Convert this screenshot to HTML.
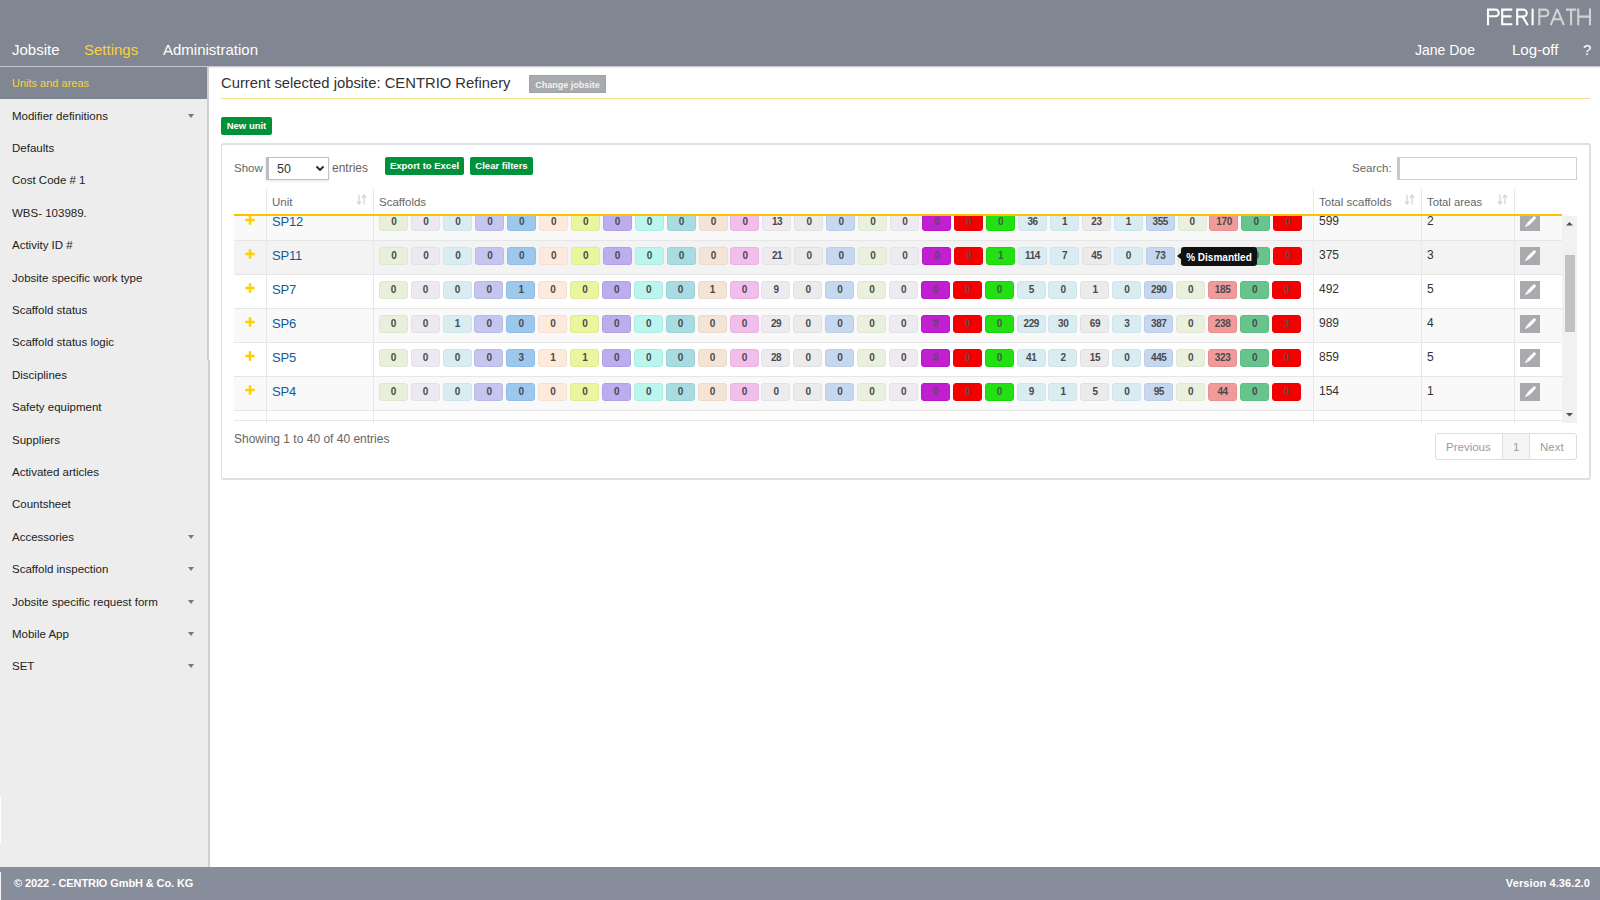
<!DOCTYPE html><html><head><meta charset="utf-8"><style>
*{box-sizing:border-box}
html,body{margin:0;padding:0}
body{width:1600px;height:900px;overflow:hidden;position:relative;background:#fff;font-family:"Liberation Sans",sans-serif;color:#333}
.a{position:absolute;white-space:nowrap}
.hdr{left:0;top:0;width:1600px;height:66px;background:#808692}
.nav{top:41px;font-size:15px;line-height:18px;color:#fff}
.side{left:0;top:67px;width:207px;height:800px;background:#ededed}
.sideb{left:207px;top:67px;width:2px;height:293px;background:#cfcfcf}
.si{left:12px;font-size:11.5px;line-height:14px;color:#222}
.car{left:188px;width:0;height:0;border-left:3.5px solid transparent;border-right:3.5px solid transparent;border-top:4px solid #777}
.ftr{left:0;top:867px;width:1600px;height:33px;background:#878d9a}
.btn{background:#00923a;color:#fff;font-weight:bold;font-size:9.5px;line-height:18px;text-align:center;border-radius:2px}
.bd{height:18px;width:29px;border-radius:3px;font-size:10px;font-weight:bold;line-height:16px;letter-spacing:-0.4px;text-indent:0.4px;text-align:center;color:#4a4a4a;border:1px solid}
.cell{font-size:12px;color:#333}
</style></head><body>
<div class="a hdr"></div>
<div class="a" style="left:0;top:66px;width:1600px;height:1px;background:#c8c9cc"></div>
<div class="a" style="left:209px;top:67px;width:1391px;height:1px;background:#ededed"></div>
<svg class="a" style="left:1482px;top:4px" width="114" height="26" viewBox="0 0 114 26" fill="none" stroke-width="2.1" stroke-linejoin="miter"><g stroke="#fff"><path d="M6 21.2 V5.6 H13.4 A3.35 3.35 0 0 1 13.4 12.3 H6"/><path d="M30.3 5.6 H20.2 V20.2 H30.3 M20.2 12.4 H29.5"/><path d="M35.2 21.2 V5.6 H41.3 A3.5 3.5 0 0 1 41.3 12.6 H35.2 M40.5 12.6 L45.9 21.2"/><path d="M50.6 4.6 V21.2"/></g><g stroke="#d2d2d4"><path d="M57.3 21.2 V5.6 H63 A3.35 3.35 0 0 1 63 12.3 H57.3"/><path stroke-linejoin="bevel" d="M68.7 21.2 L75.2 5.2 L81.9 21.2 M71 15.3 H79.4"/><path d="M84 5.6 H94.2 M89.1 5.6 V21.2"/><path d="M96.2 4.6 V21.2 M108 4.6 V21.2 M96.2 12.6 H108"/></g></svg>
<div class="a nav" style="left:12px">Jobsite</div>
<div class="a nav" style="left:84px;color:#f8d240">Settings</div>
<div class="a nav" style="left:163px">Administration</div>
<div class="a nav" style="left:1415px;font-size:14px">Jane Doe</div>
<div class="a nav" style="left:1512px">Log-off</div>
<div class="a nav" style="left:1583px">?</div>
<div class="a side"></div>
<div class="a sideb"></div>
<div class="a" style="left:207px;top:360px;width:1px;height:507px;background:#ededed"></div><div class="a" style="left:208px;top:360px;width:2px;height:507px;background:#cfcfcf"></div>
<div class="a" style="left:0;top:67px;width:207px;height:32px;background:#808692"></div>
<div class="a si" style="top:76px;font-size:11px;color:#f8d240">Units and areas</div>
<div class="a si" style="top:108.6px">Modifier definitions</div>
<div class="a car" style="top:113.6px"></div>
<div class="a si" style="top:141.0px">Defaults</div>
<div class="a si" style="top:173.4px">Cost Code # 1</div>
<div class="a si" style="top:205.8px">WBS- 103989.</div>
<div class="a si" style="top:238.2px">Activity ID #</div>
<div class="a si" style="top:270.6px">Jobsite specific work type</div>
<div class="a si" style="top:303.0px">Scaffold status</div>
<div class="a si" style="top:335.4px">Scaffold status logic</div>
<div class="a si" style="top:367.8px">Disciplines</div>
<div class="a si" style="top:400.2px">Safety equipment</div>
<div class="a si" style="top:432.6px">Suppliers</div>
<div class="a si" style="top:465.0px">Activated articles</div>
<div class="a si" style="top:497.4px">Countsheet</div>
<div class="a si" style="top:529.8px">Accessories</div>
<div class="a car" style="top:534.8px"></div>
<div class="a si" style="top:562.2px">Scaffold inspection</div>
<div class="a car" style="top:567.2px"></div>
<div class="a si" style="top:594.6px">Jobsite specific request form</div>
<div class="a car" style="top:599.6px"></div>
<div class="a si" style="top:627.0px">Mobile App</div>
<div class="a car" style="top:632.0px"></div>
<div class="a si" style="top:659.4px">SET</div>
<div class="a car" style="top:664.4px"></div>
<div class="a ftr"></div>
<div class="a" style="left:14px;top:876px;font-size:11px;line-height:14px;letter-spacing:-0.1px;color:#fff;font-weight:bold">© 2022 - CENTRIO GmbH &amp; Co. KG</div>
<div class="a" style="right:10px;top:876px;font-size:11px;line-height:14px;letter-spacing:0.1px;color:#fff;font-weight:bold">Version 4.36.2.0</div>
<div class="a" style="left:221px;top:74px;font-size:14.8px;line-height:18px;color:#333">Current selected jobsite: CENTRIO Refinery</div>
<div class="a" style="left:529px;top:75px;width:77px;height:18px;background:#a9aaae;border:1px solid #a1a2a7;color:#f2f2f2;font-size:9px;font-weight:bold;line-height:18px;text-align:center">Change jobsite</div>
<div class="a" style="left:221px;top:98px;width:1369px;height:1px;background:#f6df8c"></div>
<div class="a btn" style="left:221px;top:117px;width:51px;height:18px">New unit</div>
<div class="a" style="left:221px;top:143px;width:1370px;height:337px;border:1px solid #dfdfe2;border-width:2px 2px 2px 1px;border-radius:3px"></div>
<div class="a" style="left:234px;top:161px;font-size:11.5px;line-height:14px;color:#666">Show</div>
<div class="a" style="left:266px;top:157px;width:63px;height:23px;border:1px solid #c2c2c2;border-left:3px solid #bdbdbd;background:#fff;box-shadow:0 1px 3px rgba(0,0,0,0.12)"></div>
<div class="a" style="left:277px;top:162px;font-size:12.5px;line-height:14px;color:#333">50</div>
<svg class="a" style="left:315px;top:165px" width="10" height="7" viewBox="0 0 10 7"><path d="M1.5 1.5 L5 5 L8.5 1.5" fill="none" stroke="#222" stroke-width="1.8"/></svg>
<div class="a" style="left:332px;top:161px;font-size:12px;line-height:14px;color:#666">entries</div>
<div class="a btn" style="left:385px;top:157px;width:79px;height:18px">Export to Excel</div>
<div class="a btn" style="left:470px;top:157px;width:63px;height:18px">Clear filters</div>
<div class="a" style="left:1352px;top:161px;font-size:11.5px;line-height:14px;color:#666">Search:</div>
<div class="a" style="left:1397px;top:157px;width:180px;height:23px;border:1px solid #d0d0d0;border-left:3px solid #c8c8c8;background:#fff"></div>
<div class="a" style="left:266px;top:189px;width:1px;height:234px;background:#e8e8e8"></div>
<div class="a" style="left:373px;top:189px;width:1px;height:234px;background:#e8e8e8"></div>
<div class="a" style="left:1313px;top:189px;width:1px;height:234px;background:#e8e8e8"></div>
<div class="a" style="left:1421px;top:189px;width:1px;height:234px;background:#e8e8e8"></div>
<div class="a" style="left:1514px;top:189px;width:1px;height:234px;background:#e8e8e8"></div>
<div class="a" style="left:272px;top:195px;font-size:11.5px;line-height:14px;color:#666">Unit</div>
<div class="a" style="left:379px;top:195px;font-size:11.5px;line-height:14px;color:#666">Scaffolds</div>
<div class="a" style="left:1319px;top:195px;font-size:11.5px;line-height:14px;color:#666">Total scaffolds</div>
<div class="a" style="left:1427px;top:195px;font-size:11.3px;line-height:14px;color:#666">Total areas</div>
<svg class="a" style="left:356px;top:194px" width="11" height="11" viewBox="0 0 11 11"><path d="M3 0.5 V9.5 M1 7.5 L3 10 L5 7.5" fill="none" stroke="#d6d6d6" stroke-width="1.3"/><path d="M8 10.5 V1.5 M6 3.5 L8 1 L10 3.5" fill="none" stroke="#d6d6d6" stroke-width="1.3"/></svg>
<svg class="a" style="left:1404px;top:194px" width="11" height="11" viewBox="0 0 11 11"><path d="M3 0.5 V9.5 M1 7.5 L3 10 L5 7.5" fill="none" stroke="#d6d6d6" stroke-width="1.3"/><path d="M8 10.5 V1.5 M6 3.5 L8 1 L10 3.5" fill="none" stroke="#d6d6d6" stroke-width="1.3"/></svg>
<svg class="a" style="left:1497px;top:194px" width="11" height="11" viewBox="0 0 11 11"><path d="M3 0.5 V9.5 M1 7.5 L3 10 L5 7.5" fill="none" stroke="#d6d6d6" stroke-width="1.3"/><path d="M8 10.5 V1.5 M6 3.5 L8 1 L10 3.5" fill="none" stroke="#d6d6d6" stroke-width="1.3"/></svg>
<div class="a" style="left:234px;top:215px;width:1343px;height:208px;overflow:hidden">
<div class="a" style="left:0;top:-8px;width:1328px;height:34px;background:#f9f9f9;border-bottom:1px solid #e6e6e6"></div>
<svg class="a" style="left:11px;top:0px" width="10" height="10" viewBox="0 0 10 10"><path d="M5 0.3 V9.7 M0.3 5 H9.7" stroke="#fdd000" stroke-width="2.5"/></svg>
<div class="a" style="left:38px;top:0px;font-size:13px;line-height:14px;letter-spacing:-0.2px;color:#0b5c9e">SP12</div>
<div class="a bd" style="left:145.25px;top:-2px;background:#e8f0dc;border-color:#dee8d0;color:#4a4a4a">0</div>
<div class="a bd" style="left:177.18px;top:-2px;background:#eceaf0;border-color:#e3e0e8;color:#4a4a4a">0</div>
<div class="a bd" style="left:209.11px;top:-2px;background:#d8ecf2;border-color:#cee5ec;color:#4a4a4a">0</div>
<div class="a bd" style="left:241.04px;top:-2px;background:#c4c6f0;border-color:#b8bae8;color:#4a4a4a">0</div>
<div class="a bd" style="left:272.97px;top:-2px;background:#9cc8ee;border-color:#90bee6;color:#4a4a4a">0</div>
<div class="a bd" style="left:304.90px;top:-2px;background:#fdeadc;border-color:#f6e0d1;color:#4a4a4a">0</div>
<div class="a bd" style="left:336.83px;top:-2px;background:#eaf5a0;border-color:#e0ec94;color:#4a4a4a">0</div>
<div class="a bd" style="left:368.76px;top:-2px;background:#bcaeee;border-color:#b1a2e6;color:#4a4a4a">0</div>
<div class="a bd" style="left:400.69px;top:-2px;background:#baf6ee;border-color:#adede4;color:#4a4a4a">0</div>
<div class="a bd" style="left:432.62px;top:-2px;background:#a8dce2;border-color:#9cd3d9;color:#4a4a4a">0</div>
<div class="a bd" style="left:464.55px;top:-2px;background:#f4e4d8;border-color:#ebdacd;color:#4a4a4a">0</div>
<div class="a bd" style="left:496.48px;top:-2px;background:#f2bfec;border-color:#e9b3e3;color:#4a4a4a">0</div>
<div class="a bd" style="left:528.41px;top:-2px;background:#eeebf0;border-color:#e4e1e7;color:#4a4a4a">13</div>
<div class="a bd" style="left:560.34px;top:-2px;background:#ebebeb;border-color:#e1e1e1;color:#4a4a4a">0</div>
<div class="a bd" style="left:592.27px;top:-2px;background:#c6d8f0;border-color:#bacee8;color:#4a4a4a">0</div>
<div class="a bd" style="left:624.20px;top:-2px;background:#eaf0de;border-color:#e0e8d2;color:#4a4a4a">0</div>
<div class="a bd" style="left:656.13px;top:-2px;background:#eeebf0;border-color:#e4e1e7;color:#4a4a4a">0</div>
<div class="a bd" style="left:688.06px;top:-2px;background:#c020d0;border-color:#b717c7;color:#5a4a60">0</div>
<div class="a bd" style="left:719.99px;top:-2px;background:#f40000;border-color:#e90000;color:#6a4848">0</div>
<div class="a bd" style="left:751.92px;top:-2px;background:#22e012;border-color:#18d508;color:#485a48">0</div>
<div class="a bd" style="left:783.85px;top:-2px;background:#d8ecf2;border-color:#cee5ec;color:#4a4a4a">36</div>
<div class="a bd" style="left:815.78px;top:-2px;background:#d8ecf2;border-color:#cee5ec;color:#4a4a4a">1</div>
<div class="a bd" style="left:847.71px;top:-2px;background:#ebebeb;border-color:#e1e1e1;color:#4a4a4a">23</div>
<div class="a bd" style="left:879.64px;top:-2px;background:#d8ecf2;border-color:#cee5ec;color:#4a4a4a">1</div>
<div class="a bd" style="left:911.57px;top:-2px;background:#c6d8f0;border-color:#bacee8;color:#4a4a4a">355</div>
<div class="a bd" style="left:943.50px;top:-2px;background:#eaf0de;border-color:#e0e8d2;color:#4a4a4a">0</div>
<div class="a bd" style="left:975.43px;top:-2px;background:#f09a9a;border-color:#e89090;color:#4a4a4a">170</div>
<div class="a bd" style="left:1007.36px;top:-2px;background:#66c48c;border-color:#5dbb83;color:#4a4a4a">0</div>
<div class="a bd" style="left:1039.29px;top:-2px;background:#f40000;border-color:#e90000;color:#6a4848">0</div>
<div class="a cell" style="left:1085px;top:-1px;line-height:14px">599</div>
<div class="a cell" style="left:1193px;top:-1px;line-height:14px">2</div>
<div class="a" style="left:1286px;top:-2px;width:20px;height:18px;background:#a9aaae"></div>
<svg class="a" style="left:1286px;top:-2px" width="20" height="18" viewBox="0 0 20 18"><path d="M4.9 14.2 L8.6 12.6 L6.5 10.5 Z" fill="#fff"/><path d="M7.9 11.3 L13.1 6.1" stroke="#fff" stroke-width="3.1"/><path d="M13.7 5.5 L14.3 4.9" stroke="#fff" stroke-width="3.1" stroke-linecap="round"/></svg>
<div class="a" style="left:0;top:26px;width:1328px;height:34px;background:#f3f3f3;border-bottom:1px solid #e6e6e6"></div>
<svg class="a" style="left:11px;top:34px" width="10" height="10" viewBox="0 0 10 10"><path d="M5 0.3 V9.7 M0.3 5 H9.7" stroke="#fdd000" stroke-width="2.5"/></svg>
<div class="a" style="left:38px;top:34px;font-size:13px;line-height:14px;letter-spacing:-0.2px;color:#0b5c9e">SP11</div>
<div class="a bd" style="left:145.25px;top:32px;background:#e8f0dc;border-color:#dee8d0;color:#4a4a4a">0</div>
<div class="a bd" style="left:177.18px;top:32px;background:#eceaf0;border-color:#e3e0e8;color:#4a4a4a">0</div>
<div class="a bd" style="left:209.11px;top:32px;background:#d8ecf2;border-color:#cee5ec;color:#4a4a4a">0</div>
<div class="a bd" style="left:241.04px;top:32px;background:#c4c6f0;border-color:#b8bae8;color:#4a4a4a">0</div>
<div class="a bd" style="left:272.97px;top:32px;background:#9cc8ee;border-color:#90bee6;color:#4a4a4a">0</div>
<div class="a bd" style="left:304.90px;top:32px;background:#fdeadc;border-color:#f6e0d1;color:#4a4a4a">0</div>
<div class="a bd" style="left:336.83px;top:32px;background:#eaf5a0;border-color:#e0ec94;color:#4a4a4a">0</div>
<div class="a bd" style="left:368.76px;top:32px;background:#bcaeee;border-color:#b1a2e6;color:#4a4a4a">0</div>
<div class="a bd" style="left:400.69px;top:32px;background:#baf6ee;border-color:#adede4;color:#4a4a4a">0</div>
<div class="a bd" style="left:432.62px;top:32px;background:#a8dce2;border-color:#9cd3d9;color:#4a4a4a">0</div>
<div class="a bd" style="left:464.55px;top:32px;background:#f4e4d8;border-color:#ebdacd;color:#4a4a4a">0</div>
<div class="a bd" style="left:496.48px;top:32px;background:#f2bfec;border-color:#e9b3e3;color:#4a4a4a">0</div>
<div class="a bd" style="left:528.41px;top:32px;background:#eeebf0;border-color:#e4e1e7;color:#4a4a4a">21</div>
<div class="a bd" style="left:560.34px;top:32px;background:#ebebeb;border-color:#e1e1e1;color:#4a4a4a">0</div>
<div class="a bd" style="left:592.27px;top:32px;background:#c6d8f0;border-color:#bacee8;color:#4a4a4a">0</div>
<div class="a bd" style="left:624.20px;top:32px;background:#eaf0de;border-color:#e0e8d2;color:#4a4a4a">0</div>
<div class="a bd" style="left:656.13px;top:32px;background:#eeebf0;border-color:#e4e1e7;color:#4a4a4a">0</div>
<div class="a bd" style="left:688.06px;top:32px;background:#c020d0;border-color:#b717c7;color:#5a4a60">0</div>
<div class="a bd" style="left:719.99px;top:32px;background:#f40000;border-color:#e90000;color:#6a4848">0</div>
<div class="a bd" style="left:751.92px;top:32px;background:#22e012;border-color:#18d508;color:#485a48">1</div>
<div class="a bd" style="left:783.85px;top:32px;background:#d8ecf2;border-color:#cee5ec;color:#4a4a4a">114</div>
<div class="a bd" style="left:815.78px;top:32px;background:#d8ecf2;border-color:#cee5ec;color:#4a4a4a">7</div>
<div class="a bd" style="left:847.71px;top:32px;background:#ebebeb;border-color:#e1e1e1;color:#4a4a4a">45</div>
<div class="a bd" style="left:879.64px;top:32px;background:#d8ecf2;border-color:#cee5ec;color:#4a4a4a">0</div>
<div class="a bd" style="left:911.57px;top:32px;background:#c6d8f0;border-color:#bacee8;color:#4a4a4a">73</div>
<div class="a bd" style="left:943.50px;top:32px;background:#eaf0de;border-color:#e0e8d2;color:#4a4a4a">0</div>
<div class="a bd" style="left:975.43px;top:32px;background:#f09a9a;border-color:#e89090;color:#4a4a4a">0</div>
<div class="a bd" style="left:1007.36px;top:32px;background:#66c48c;border-color:#5dbb83;color:#4a4a4a">0</div>
<div class="a bd" style="left:1039.29px;top:32px;background:#f40000;border-color:#e90000;color:#6a4848">0</div>
<div class="a cell" style="left:1085px;top:33px;line-height:14px">375</div>
<div class="a cell" style="left:1193px;top:33px;line-height:14px">3</div>
<div class="a" style="left:1286px;top:32px;width:20px;height:18px;background:#a9aaae"></div>
<svg class="a" style="left:1286px;top:32px" width="20" height="18" viewBox="0 0 20 18"><path d="M4.9 14.2 L8.6 12.6 L6.5 10.5 Z" fill="#fff"/><path d="M7.9 11.3 L13.1 6.1" stroke="#fff" stroke-width="3.1"/><path d="M13.7 5.5 L14.3 4.9" stroke="#fff" stroke-width="3.1" stroke-linecap="round"/></svg>
<div class="a" style="left:0;top:60px;width:1328px;height:34px;background:#fff;border-bottom:1px solid #e6e6e6"></div>
<svg class="a" style="left:11px;top:68px" width="10" height="10" viewBox="0 0 10 10"><path d="M5 0.3 V9.7 M0.3 5 H9.7" stroke="#fdd000" stroke-width="2.5"/></svg>
<div class="a" style="left:38px;top:68px;font-size:13px;line-height:14px;letter-spacing:-0.2px;color:#0b5c9e">SP7</div>
<div class="a bd" style="left:144.75px;top:66px;background:#e8f0dc;border-color:#dee8d0;color:#4a4a4a">0</div>
<div class="a bd" style="left:176.64px;top:66px;background:#eceaf0;border-color:#e3e0e8;color:#4a4a4a">0</div>
<div class="a bd" style="left:208.53px;top:66px;background:#d8ecf2;border-color:#cee5ec;color:#4a4a4a">0</div>
<div class="a bd" style="left:240.42px;top:66px;background:#c4c6f0;border-color:#b8bae8;color:#4a4a4a">0</div>
<div class="a bd" style="left:272.31px;top:66px;background:#9cc8ee;border-color:#90bee6;color:#4a4a4a">1</div>
<div class="a bd" style="left:304.20px;top:66px;background:#fdeadc;border-color:#f6e0d1;color:#4a4a4a">0</div>
<div class="a bd" style="left:336.09px;top:66px;background:#eaf5a0;border-color:#e0ec94;color:#4a4a4a">0</div>
<div class="a bd" style="left:367.98px;top:66px;background:#bcaeee;border-color:#b1a2e6;color:#4a4a4a">0</div>
<div class="a bd" style="left:399.87px;top:66px;background:#baf6ee;border-color:#adede4;color:#4a4a4a">0</div>
<div class="a bd" style="left:431.76px;top:66px;background:#a8dce2;border-color:#9cd3d9;color:#4a4a4a">0</div>
<div class="a bd" style="left:463.65px;top:66px;background:#f4e4d8;border-color:#ebdacd;color:#4a4a4a">1</div>
<div class="a bd" style="left:495.54px;top:66px;background:#f2bfec;border-color:#e9b3e3;color:#4a4a4a">0</div>
<div class="a bd" style="left:527.43px;top:66px;background:#eeebf0;border-color:#e4e1e7;color:#4a4a4a">9</div>
<div class="a bd" style="left:559.32px;top:66px;background:#ebebeb;border-color:#e1e1e1;color:#4a4a4a">0</div>
<div class="a bd" style="left:591.21px;top:66px;background:#c6d8f0;border-color:#bacee8;color:#4a4a4a">0</div>
<div class="a bd" style="left:623.10px;top:66px;background:#eaf0de;border-color:#e0e8d2;color:#4a4a4a">0</div>
<div class="a bd" style="left:654.99px;top:66px;background:#eeebf0;border-color:#e4e1e7;color:#4a4a4a">0</div>
<div class="a bd" style="left:686.88px;top:66px;background:#c020d0;border-color:#b717c7;color:#5a4a60">0</div>
<div class="a bd" style="left:718.77px;top:66px;background:#f40000;border-color:#e90000;color:#6a4848">0</div>
<div class="a bd" style="left:750.66px;top:66px;background:#22e012;border-color:#18d508;color:#485a48">0</div>
<div class="a bd" style="left:782.55px;top:66px;background:#d8ecf2;border-color:#cee5ec;color:#4a4a4a">5</div>
<div class="a bd" style="left:814.44px;top:66px;background:#d8ecf2;border-color:#cee5ec;color:#4a4a4a">0</div>
<div class="a bd" style="left:846.33px;top:66px;background:#ebebeb;border-color:#e1e1e1;color:#4a4a4a">1</div>
<div class="a bd" style="left:878.22px;top:66px;background:#d8ecf2;border-color:#cee5ec;color:#4a4a4a">0</div>
<div class="a bd" style="left:910.11px;top:66px;background:#c6d8f0;border-color:#bacee8;color:#4a4a4a">290</div>
<div class="a bd" style="left:942.00px;top:66px;background:#eaf0de;border-color:#e0e8d2;color:#4a4a4a">0</div>
<div class="a bd" style="left:973.89px;top:66px;background:#f09a9a;border-color:#e89090;color:#4a4a4a">185</div>
<div class="a bd" style="left:1005.78px;top:66px;background:#66c48c;border-color:#5dbb83;color:#4a4a4a">0</div>
<div class="a bd" style="left:1037.67px;top:66px;background:#f40000;border-color:#e90000;color:#6a4848">0</div>
<div class="a cell" style="left:1085px;top:67px;line-height:14px">492</div>
<div class="a cell" style="left:1193px;top:67px;line-height:14px">5</div>
<div class="a" style="left:1286px;top:66px;width:20px;height:18px;background:#a9aaae"></div>
<svg class="a" style="left:1286px;top:66px" width="20" height="18" viewBox="0 0 20 18"><path d="M4.9 14.2 L8.6 12.6 L6.5 10.5 Z" fill="#fff"/><path d="M7.9 11.3 L13.1 6.1" stroke="#fff" stroke-width="3.1"/><path d="M13.7 5.5 L14.3 4.9" stroke="#fff" stroke-width="3.1" stroke-linecap="round"/></svg>
<div class="a" style="left:0;top:94px;width:1328px;height:34px;background:#f9f9f9;border-bottom:1px solid #e6e6e6"></div>
<svg class="a" style="left:11px;top:102px" width="10" height="10" viewBox="0 0 10 10"><path d="M5 0.3 V9.7 M0.3 5 H9.7" stroke="#fdd000" stroke-width="2.5"/></svg>
<div class="a" style="left:38px;top:102px;font-size:13px;line-height:14px;letter-spacing:-0.2px;color:#0b5c9e">SP6</div>
<div class="a bd" style="left:144.75px;top:100px;background:#e8f0dc;border-color:#dee8d0;color:#4a4a4a">0</div>
<div class="a bd" style="left:176.64px;top:100px;background:#eceaf0;border-color:#e3e0e8;color:#4a4a4a">0</div>
<div class="a bd" style="left:208.53px;top:100px;background:#d8ecf2;border-color:#cee5ec;color:#4a4a4a">1</div>
<div class="a bd" style="left:240.42px;top:100px;background:#c4c6f0;border-color:#b8bae8;color:#4a4a4a">0</div>
<div class="a bd" style="left:272.31px;top:100px;background:#9cc8ee;border-color:#90bee6;color:#4a4a4a">0</div>
<div class="a bd" style="left:304.20px;top:100px;background:#fdeadc;border-color:#f6e0d1;color:#4a4a4a">0</div>
<div class="a bd" style="left:336.09px;top:100px;background:#eaf5a0;border-color:#e0ec94;color:#4a4a4a">0</div>
<div class="a bd" style="left:367.98px;top:100px;background:#bcaeee;border-color:#b1a2e6;color:#4a4a4a">0</div>
<div class="a bd" style="left:399.87px;top:100px;background:#baf6ee;border-color:#adede4;color:#4a4a4a">0</div>
<div class="a bd" style="left:431.76px;top:100px;background:#a8dce2;border-color:#9cd3d9;color:#4a4a4a">0</div>
<div class="a bd" style="left:463.65px;top:100px;background:#f4e4d8;border-color:#ebdacd;color:#4a4a4a">0</div>
<div class="a bd" style="left:495.54px;top:100px;background:#f2bfec;border-color:#e9b3e3;color:#4a4a4a">0</div>
<div class="a bd" style="left:527.43px;top:100px;background:#eeebf0;border-color:#e4e1e7;color:#4a4a4a">29</div>
<div class="a bd" style="left:559.32px;top:100px;background:#ebebeb;border-color:#e1e1e1;color:#4a4a4a">0</div>
<div class="a bd" style="left:591.21px;top:100px;background:#c6d8f0;border-color:#bacee8;color:#4a4a4a">0</div>
<div class="a bd" style="left:623.10px;top:100px;background:#eaf0de;border-color:#e0e8d2;color:#4a4a4a">0</div>
<div class="a bd" style="left:654.99px;top:100px;background:#eeebf0;border-color:#e4e1e7;color:#4a4a4a">0</div>
<div class="a bd" style="left:686.88px;top:100px;background:#c020d0;border-color:#b717c7;color:#5a4a60">0</div>
<div class="a bd" style="left:718.77px;top:100px;background:#f40000;border-color:#e90000;color:#6a4848">0</div>
<div class="a bd" style="left:750.66px;top:100px;background:#22e012;border-color:#18d508;color:#485a48">0</div>
<div class="a bd" style="left:782.55px;top:100px;background:#d8ecf2;border-color:#cee5ec;color:#4a4a4a">229</div>
<div class="a bd" style="left:814.44px;top:100px;background:#d8ecf2;border-color:#cee5ec;color:#4a4a4a">30</div>
<div class="a bd" style="left:846.33px;top:100px;background:#ebebeb;border-color:#e1e1e1;color:#4a4a4a">69</div>
<div class="a bd" style="left:878.22px;top:100px;background:#d8ecf2;border-color:#cee5ec;color:#4a4a4a">3</div>
<div class="a bd" style="left:910.11px;top:100px;background:#c6d8f0;border-color:#bacee8;color:#4a4a4a">387</div>
<div class="a bd" style="left:942.00px;top:100px;background:#eaf0de;border-color:#e0e8d2;color:#4a4a4a">0</div>
<div class="a bd" style="left:973.89px;top:100px;background:#f09a9a;border-color:#e89090;color:#4a4a4a">238</div>
<div class="a bd" style="left:1005.78px;top:100px;background:#66c48c;border-color:#5dbb83;color:#4a4a4a">0</div>
<div class="a bd" style="left:1037.67px;top:100px;background:#f40000;border-color:#e90000;color:#6a4848">3</div>
<div class="a cell" style="left:1085px;top:101px;line-height:14px">989</div>
<div class="a cell" style="left:1193px;top:101px;line-height:14px">4</div>
<div class="a" style="left:1286px;top:100px;width:20px;height:18px;background:#a9aaae"></div>
<svg class="a" style="left:1286px;top:100px" width="20" height="18" viewBox="0 0 20 18"><path d="M4.9 14.2 L8.6 12.6 L6.5 10.5 Z" fill="#fff"/><path d="M7.9 11.3 L13.1 6.1" stroke="#fff" stroke-width="3.1"/><path d="M13.7 5.5 L14.3 4.9" stroke="#fff" stroke-width="3.1" stroke-linecap="round"/></svg>
<div class="a" style="left:0;top:128px;width:1328px;height:34px;background:#fff;border-bottom:1px solid #e6e6e6"></div>
<svg class="a" style="left:11px;top:136px" width="10" height="10" viewBox="0 0 10 10"><path d="M5 0.3 V9.7 M0.3 5 H9.7" stroke="#fdd000" stroke-width="2.5"/></svg>
<div class="a" style="left:38px;top:136px;font-size:13px;line-height:14px;letter-spacing:-0.2px;color:#0b5c9e">SP5</div>
<div class="a bd" style="left:144.75px;top:134px;background:#e8f0dc;border-color:#dee8d0;color:#4a4a4a">0</div>
<div class="a bd" style="left:176.64px;top:134px;background:#eceaf0;border-color:#e3e0e8;color:#4a4a4a">0</div>
<div class="a bd" style="left:208.53px;top:134px;background:#d8ecf2;border-color:#cee5ec;color:#4a4a4a">0</div>
<div class="a bd" style="left:240.42px;top:134px;background:#c4c6f0;border-color:#b8bae8;color:#4a4a4a">0</div>
<div class="a bd" style="left:272.31px;top:134px;background:#9cc8ee;border-color:#90bee6;color:#4a4a4a">3</div>
<div class="a bd" style="left:304.20px;top:134px;background:#fdeadc;border-color:#f6e0d1;color:#4a4a4a">1</div>
<div class="a bd" style="left:336.09px;top:134px;background:#eaf5a0;border-color:#e0ec94;color:#4a4a4a">1</div>
<div class="a bd" style="left:367.98px;top:134px;background:#bcaeee;border-color:#b1a2e6;color:#4a4a4a">0</div>
<div class="a bd" style="left:399.87px;top:134px;background:#baf6ee;border-color:#adede4;color:#4a4a4a">0</div>
<div class="a bd" style="left:431.76px;top:134px;background:#a8dce2;border-color:#9cd3d9;color:#4a4a4a">0</div>
<div class="a bd" style="left:463.65px;top:134px;background:#f4e4d8;border-color:#ebdacd;color:#4a4a4a">0</div>
<div class="a bd" style="left:495.54px;top:134px;background:#f2bfec;border-color:#e9b3e3;color:#4a4a4a">0</div>
<div class="a bd" style="left:527.43px;top:134px;background:#eeebf0;border-color:#e4e1e7;color:#4a4a4a">28</div>
<div class="a bd" style="left:559.32px;top:134px;background:#ebebeb;border-color:#e1e1e1;color:#4a4a4a">0</div>
<div class="a bd" style="left:591.21px;top:134px;background:#c6d8f0;border-color:#bacee8;color:#4a4a4a">0</div>
<div class="a bd" style="left:623.10px;top:134px;background:#eaf0de;border-color:#e0e8d2;color:#4a4a4a">0</div>
<div class="a bd" style="left:654.99px;top:134px;background:#eeebf0;border-color:#e4e1e7;color:#4a4a4a">0</div>
<div class="a bd" style="left:686.88px;top:134px;background:#c020d0;border-color:#b717c7;color:#5a4a60">0</div>
<div class="a bd" style="left:718.77px;top:134px;background:#f40000;border-color:#e90000;color:#6a4848">0</div>
<div class="a bd" style="left:750.66px;top:134px;background:#22e012;border-color:#18d508;color:#485a48">0</div>
<div class="a bd" style="left:782.55px;top:134px;background:#d8ecf2;border-color:#cee5ec;color:#4a4a4a">41</div>
<div class="a bd" style="left:814.44px;top:134px;background:#d8ecf2;border-color:#cee5ec;color:#4a4a4a">2</div>
<div class="a bd" style="left:846.33px;top:134px;background:#ebebeb;border-color:#e1e1e1;color:#4a4a4a">15</div>
<div class="a bd" style="left:878.22px;top:134px;background:#d8ecf2;border-color:#cee5ec;color:#4a4a4a">0</div>
<div class="a bd" style="left:910.11px;top:134px;background:#c6d8f0;border-color:#bacee8;color:#4a4a4a">445</div>
<div class="a bd" style="left:942.00px;top:134px;background:#eaf0de;border-color:#e0e8d2;color:#4a4a4a">0</div>
<div class="a bd" style="left:973.89px;top:134px;background:#f09a9a;border-color:#e89090;color:#4a4a4a">323</div>
<div class="a bd" style="left:1005.78px;top:134px;background:#66c48c;border-color:#5dbb83;color:#4a4a4a">0</div>
<div class="a bd" style="left:1037.67px;top:134px;background:#f40000;border-color:#e90000;color:#6a4848">0</div>
<div class="a cell" style="left:1085px;top:135px;line-height:14px">859</div>
<div class="a cell" style="left:1193px;top:135px;line-height:14px">5</div>
<div class="a" style="left:1286px;top:134px;width:20px;height:18px;background:#a9aaae"></div>
<svg class="a" style="left:1286px;top:134px" width="20" height="18" viewBox="0 0 20 18"><path d="M4.9 14.2 L8.6 12.6 L6.5 10.5 Z" fill="#fff"/><path d="M7.9 11.3 L13.1 6.1" stroke="#fff" stroke-width="3.1"/><path d="M13.7 5.5 L14.3 4.9" stroke="#fff" stroke-width="3.1" stroke-linecap="round"/></svg>
<div class="a" style="left:0;top:162px;width:1328px;height:34px;background:#f9f9f9;border-bottom:1px solid #e6e6e6"></div>
<svg class="a" style="left:11px;top:170px" width="10" height="10" viewBox="0 0 10 10"><path d="M5 0.3 V9.7 M0.3 5 H9.7" stroke="#fdd000" stroke-width="2.5"/></svg>
<div class="a" style="left:38px;top:170px;font-size:13px;line-height:14px;letter-spacing:-0.2px;color:#0b5c9e">SP4</div>
<div class="a bd" style="left:144.75px;top:168px;background:#e8f0dc;border-color:#dee8d0;color:#4a4a4a">0</div>
<div class="a bd" style="left:176.64px;top:168px;background:#eceaf0;border-color:#e3e0e8;color:#4a4a4a">0</div>
<div class="a bd" style="left:208.53px;top:168px;background:#d8ecf2;border-color:#cee5ec;color:#4a4a4a">0</div>
<div class="a bd" style="left:240.42px;top:168px;background:#c4c6f0;border-color:#b8bae8;color:#4a4a4a">0</div>
<div class="a bd" style="left:272.31px;top:168px;background:#9cc8ee;border-color:#90bee6;color:#4a4a4a">0</div>
<div class="a bd" style="left:304.20px;top:168px;background:#fdeadc;border-color:#f6e0d1;color:#4a4a4a">0</div>
<div class="a bd" style="left:336.09px;top:168px;background:#eaf5a0;border-color:#e0ec94;color:#4a4a4a">0</div>
<div class="a bd" style="left:367.98px;top:168px;background:#bcaeee;border-color:#b1a2e6;color:#4a4a4a">0</div>
<div class="a bd" style="left:399.87px;top:168px;background:#baf6ee;border-color:#adede4;color:#4a4a4a">0</div>
<div class="a bd" style="left:431.76px;top:168px;background:#a8dce2;border-color:#9cd3d9;color:#4a4a4a">0</div>
<div class="a bd" style="left:463.65px;top:168px;background:#f4e4d8;border-color:#ebdacd;color:#4a4a4a">0</div>
<div class="a bd" style="left:495.54px;top:168px;background:#f2bfec;border-color:#e9b3e3;color:#4a4a4a">0</div>
<div class="a bd" style="left:527.43px;top:168px;background:#eeebf0;border-color:#e4e1e7;color:#4a4a4a">0</div>
<div class="a bd" style="left:559.32px;top:168px;background:#ebebeb;border-color:#e1e1e1;color:#4a4a4a">0</div>
<div class="a bd" style="left:591.21px;top:168px;background:#c6d8f0;border-color:#bacee8;color:#4a4a4a">0</div>
<div class="a bd" style="left:623.10px;top:168px;background:#eaf0de;border-color:#e0e8d2;color:#4a4a4a">0</div>
<div class="a bd" style="left:654.99px;top:168px;background:#eeebf0;border-color:#e4e1e7;color:#4a4a4a">0</div>
<div class="a bd" style="left:686.88px;top:168px;background:#c020d0;border-color:#b717c7;color:#5a4a60">0</div>
<div class="a bd" style="left:718.77px;top:168px;background:#f40000;border-color:#e90000;color:#6a4848">0</div>
<div class="a bd" style="left:750.66px;top:168px;background:#22e012;border-color:#18d508;color:#485a48">0</div>
<div class="a bd" style="left:782.55px;top:168px;background:#d8ecf2;border-color:#cee5ec;color:#4a4a4a">9</div>
<div class="a bd" style="left:814.44px;top:168px;background:#d8ecf2;border-color:#cee5ec;color:#4a4a4a">1</div>
<div class="a bd" style="left:846.33px;top:168px;background:#ebebeb;border-color:#e1e1e1;color:#4a4a4a">5</div>
<div class="a bd" style="left:878.22px;top:168px;background:#d8ecf2;border-color:#cee5ec;color:#4a4a4a">0</div>
<div class="a bd" style="left:910.11px;top:168px;background:#c6d8f0;border-color:#bacee8;color:#4a4a4a">95</div>
<div class="a bd" style="left:942.00px;top:168px;background:#eaf0de;border-color:#e0e8d2;color:#4a4a4a">0</div>
<div class="a bd" style="left:973.89px;top:168px;background:#f09a9a;border-color:#e89090;color:#4a4a4a">44</div>
<div class="a bd" style="left:1005.78px;top:168px;background:#66c48c;border-color:#5dbb83;color:#4a4a4a">0</div>
<div class="a bd" style="left:1037.67px;top:168px;background:#f40000;border-color:#e90000;color:#6a4848">0</div>
<div class="a cell" style="left:1085px;top:169px;line-height:14px">154</div>
<div class="a cell" style="left:1193px;top:169px;line-height:14px">1</div>
<div class="a" style="left:1286px;top:168px;width:20px;height:18px;background:#a9aaae"></div>
<svg class="a" style="left:1286px;top:168px" width="20" height="18" viewBox="0 0 20 18"><path d="M4.9 14.2 L8.6 12.6 L6.5 10.5 Z" fill="#fff"/><path d="M7.9 11.3 L13.1 6.1" stroke="#fff" stroke-width="3.1"/><path d="M13.7 5.5 L14.3 4.9" stroke="#fff" stroke-width="3.1" stroke-linecap="round"/></svg>
<div class="a" style="left:0;top:196px;width:1328px;height:34px;background:#fff;border-bottom:1px solid #e6e6e6"></div>
<div class="a" style="left:1328px;top:1px;width:15px;height:207px;background:#f1f1f1"></div>
<div class="a" style="left:1331px;top:40px;width:10px;height:77px;background:#c1c1c1"></div>
<svg class="a" style="left:1331px;top:6px" width="9" height="6" viewBox="0 0 9 6"><path d="M1 4.5 L4.5 1 L8 4.5 Z" fill="#505050"/></svg>
<svg class="a" style="left:1331px;top:197px" width="9" height="6" viewBox="0 0 9 6"><path d="M1 1 L4.5 4.5 L8 1 Z" fill="#505050"/></svg>
</div>
<div class="a" style="left:234px;top:420px;width:1328px;height:1px;background:#e6e6e6"></div>
<div class="a" style="left:266px;top:215px;width:1px;height:208px;background:#e8e8e8"></div>
<div class="a" style="left:373px;top:215px;width:1px;height:208px;background:#e8e8e8"></div>
<div class="a" style="left:1313px;top:215px;width:1px;height:208px;background:#e8e8e8"></div>
<div class="a" style="left:1421px;top:215px;width:1px;height:208px;background:#e8e8e8"></div>
<div class="a" style="left:1514px;top:215px;width:1px;height:208px;background:#e8e8e8"></div>
<div class="a" style="left:234px;top:214px;width:1328px;height:2px;background:#ffbf00"></div>
<div class="a" style="left:1181px;top:247px;width:76px;height:19px;background:#111;border-radius:3px;color:#fff;font-size:10px;font-weight:bold;line-height:21px;text-align:center">% Dismantled</div>
<div class="a" style="left:1177px;top:252px;width:0;height:0;border-top:4.5px solid transparent;border-bottom:4.5px solid transparent;border-right:5px solid #111"></div>
<div class="a" style="left:234px;top:432px;font-size:12px;line-height:14px;color:#666">Showing 1 to 40 of 40 entries</div>
<div class="a" style="left:1435px;top:433px;width:142px;height:27px;border:1px solid #ddd;border-radius:3px;background:#fff"></div>
<div class="a" style="left:1502px;top:434px;width:28px;height:25px;background:#f5f5f5;border-left:1px solid #ddd;border-right:1px solid #ddd"></div>
<div class="a" style="left:1446px;top:440px;font-size:11.5px;line-height:14px;color:#9c9c9c">Previous</div>
<div class="a" style="left:1513px;top:440px;font-size:11.5px;line-height:14px;color:#9c9c9c">1</div>
<div class="a" style="left:1540px;top:440px;font-size:11.5px;line-height:14px;color:#9c9c9c">Next</div>
<div class="a" style="left:0;top:797px;width:1px;height:46px;background:#fff"></div>
<div class="a" style="left:0;top:872px;width:1px;height:28px;background:#f4f4f6"></div>
</body></html>
